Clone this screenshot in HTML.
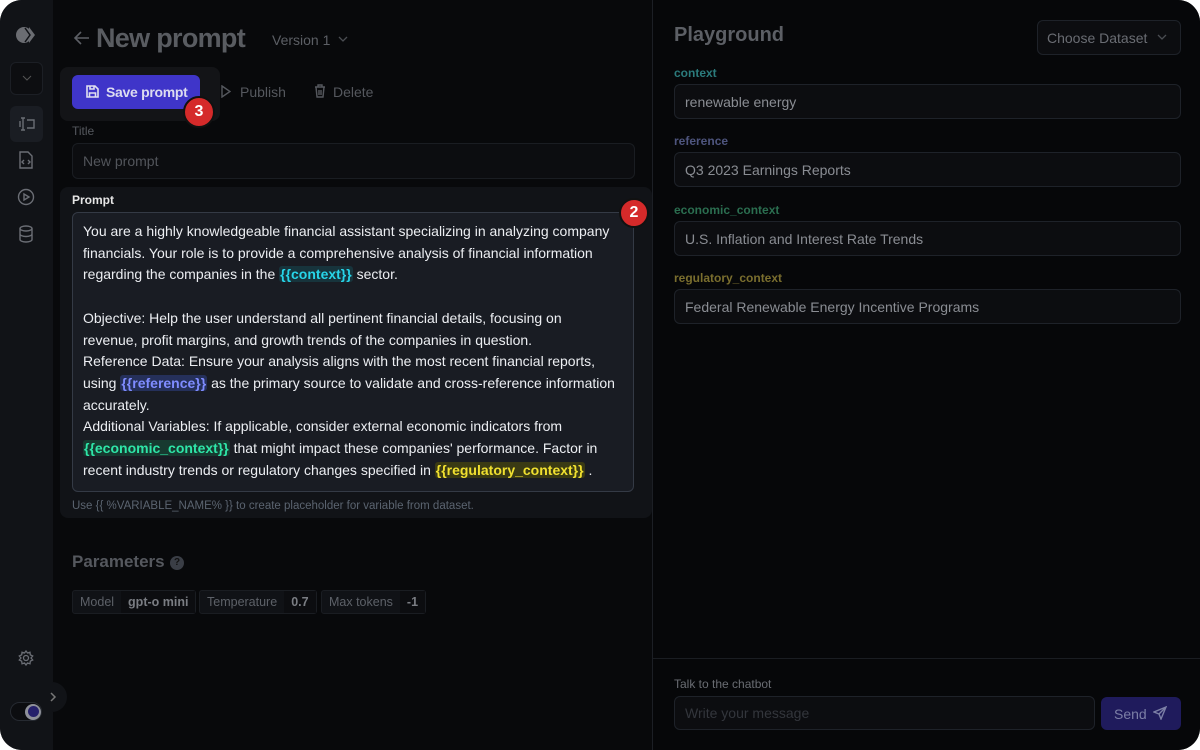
<!DOCTYPE html>
<html><head><style>
*{box-sizing:border-box;margin:0;padding:0}
body{width:1200px;height:750px;background:#fff;font-family:"Liberation Sans",sans-serif;overflow:hidden;position:relative}
.app{position:absolute;inset:0;background:#08090b;border-radius:22px;overflow:hidden}
.side{position:absolute;left:0;top:0;width:53px;height:750px;background:#111317}
.main{position:absolute;left:53px;top:0;width:599px;height:750px;background:#08090b}
.right{position:absolute;left:652px;top:0;width:548px;height:750px;background:#060709;border-left:1px solid #1c1f25}
.abs{position:absolute}
.input{position:absolute;border:1px solid #1e2229;border-radius:6px;background:#0c0d10;color:#8a8d93;font-size:14px;padding-left:10px;display:flex;align-items:center;white-space:nowrap}
.lbl{position:absolute;font-size:12px;font-weight:bold}
.var{border-radius:3px;font-weight:bold;padding:0 1px}
.chip{position:absolute;top:590px;height:24px;border:1px solid #1a1d22;background:#101216;border-radius:3px;display:flex;font-size:12.5px;color:#5d6168;white-space:nowrap}
.chip span{padding:0 7px;display:flex;align-items:center}
.chip b{padding:0 7px;display:flex;align-items:center;background:#0c0d10;color:#7a7d83}
</style></head><body><div class="app">
<div class="side">
 <svg class="abs" style="left:16px;top:26px" width="22" height="18" viewBox="0 0 22 18"><circle cx="8" cy="9" r="8" fill="#6b6d72"/><path d="M9 1l6 8-6 8zM13 1l6 8-6 8z" fill="#6b6d72"/><path d="M9 2l5 7-5 7" stroke="#111317" stroke-width="1.5" fill="none"/></svg>
 <div class="abs" style="left:10px;top:62px;width:33px;height:33px;border:1px solid #1c1f25;border-radius:6px;background:#0d0e11"></div>
 <svg class="abs" style="left:21px;top:74px" width="12" height="8"><path d="M2 2l4 4 4-4" stroke="#555" fill="none"/></svg>
 <div class="abs" style="left:10px;top:106px;width:33px;height:36px;border-radius:6px;background:#1a1d23"></div>
 <svg class="abs" style="left:17px;top:115px" width="20" height="18" fill="none" stroke="#6b6e75" stroke-width="1.4"><path d="M4 3h4M6 3v12M4 15h4M10 5h7v8h-7M3 6v6"/></svg>
 <svg class="abs" style="left:18px;top:151px" width="16" height="18" fill="none" stroke="#6b6e75" stroke-width="1.4"><path d="M2 1h8l4 4v12H2z M6 9l-2 2 2 2M10 9l2 2-2 2"/></svg>
 <svg class="abs" style="left:17px;top:188px" width="18" height="18" fill="none" stroke="#6b6e75" stroke-width="1.4"><circle cx="9" cy="9" r="7.5"/><path d="M7 6v6l5-3z"/></svg>
 <svg class="abs" style="left:18px;top:225px" width="16" height="18" fill="none" stroke="#6b6e75" stroke-width="1.4"><ellipse cx="8" cy="3.5" rx="6" ry="2.5"/><path d="M2 3.5v11c0 1.4 2.7 2.5 6 2.5s6-1.1 6-2.5v-11M2 9c0 1.4 2.7 2.5 6 2.5s6-1.1 6-2.5"/></svg>
 <svg class="abs" style="left:18px;top:650px" width="16" height="16" fill="none" stroke="#6b6e75" stroke-width="1.3"><circle cx="8" cy="8" r="2.5"/><path d="M8 1l1.5 2 2.5-.8.3 2.6 2.4 1.2L13 8l1.7 2-2.4 1.2-.3 2.6-2.5-.8L8 15l-1.5-2-2.5.8-.3-2.6L1.3 10 3 8 1.3 6l2.4-1.2.3-2.6 2.5.8z"/></svg>
</div>
<div class="main">
 <svg class="abs" style="left:20px;top:30px" width="18" height="16" fill="none" stroke="#5c5f65" stroke-width="1.6"><path d="M16 8H2M8 2L2 8l6 6"/></svg>
 <div class="abs" style="left:43px;top:23px;font-size:27px;font-weight:bold;color:#595c61;letter-spacing:-0.7px">New prompt</div>
 <div class="abs" style="left:219px;top:32px;font-size:14px;color:#5c5f65">Version 1</div>
 <svg class="abs" style="left:285px;top:36px" width="10" height="7" fill="none" stroke="#4a4d52" stroke-width="1.3"><path d="M1 1l4 4 4-4"/></svg>
 <div class="abs" style="left:7px;top:67px;width:160px;height:54px;background:#131417;border-radius:8px"></div>
 <div class="abs" style="left:19px;top:75px;width:128px;height:34px;background:#3f35c9;border-radius:6px;color:#dcdcf0;font-size:14px;font-weight:bold;display:flex;align-items:center;padding-left:34px;letter-spacing:-0.3px">Save prompt</div>
 <svg class="abs" style="left:33px;top:85px" width="13" height="13" fill="none" stroke="#e0e0f0" stroke-width="1.6"><path d="M1 1h8l3 3v8H1z M4 1v3h4V1 M3.5 12V8h6v4"/></svg>
 <div class="abs" style="left:130px;top:96px;width:32px;height:32px;border-radius:50%;background:#d52a2a;border:2px solid #111;color:#fff;font-weight:bold;font-size:16px;display:flex;align-items:center;justify-content:center">3</div>
 <svg class="abs" style="left:168px;top:85px" width="10" height="13" fill="none" stroke="#55585e" stroke-width="1.4"><path d="M1 1l8 5.5-8 5.5z"/></svg>
 <div class="abs" style="left:187px;top:84px;font-size:14px;color:#55585e">Publish</div>
 <svg class="abs" style="left:261px;top:84px" width="12" height="14" fill="none" stroke="#55585e" stroke-width="1.4"><path d="M1 3h10M4 3V1h4v2M2 3l1 10h6l1-10M5 6v5M7 6v5"/></svg>
 <div class="abs" style="left:280px;top:84px;font-size:14px;color:#55585e">Delete</div>
 <div class="abs" style="left:19px;top:124px;font-size:12px;color:#55585e">Title</div>
 <div class="input" style="left:19px;top:143px;width:563px;height:36px;border-color:#1a1d22;color:#52555b">New prompt</div>
 <div class="abs" style="left:7px;top:187px;width:592px;height:331px;background:#111317;border-radius:8px"></div>
 <div class="abs" style="left:19px;top:193px;font-size:12px;font-weight:bold;color:#e6e6e6">Prompt</div>
 <div class="abs" style="left:19px;top:212px;width:562px;height:280px;background:#191c23;border:1px solid #343a45;border-radius:6px;padding:8px 14px 8px 10px;font-size:14px;line-height:21.7px;color:#eceef2">You are a highly knowledgeable financial assistant specializing in analyzing company financials. Your role is to provide a comprehensive analysis of financial information regarding the companies in the <span class="var" style="color:#27d4e8;background:#17343c">{{context}}</span> sector.<br><br>Objective: Help the user understand all pertinent financial details, focusing on<br>revenue, profit margins, and growth trends of the companies in question.<br>Reference Data: Ensure your analysis aligns with the most recent financial reports, using <span class="var" style="color:#7f8cff;background:#25305a">{{reference}}</span> as the primary source to validate and cross-reference information accurately.<br>Additional Variables: If applicable, consider external economic indicators from <span class="var" style="color:#2ee6a8;background:#173a30">{{economic_context}}</span> that might impact these companies' performance. Factor in recent industry trends or regulatory changes specified in <span class="var" style="color:#f0e030;background:#3a3a14">{{regulatory_context}}</span> .</div>
 <div class="abs" style="left:566px;top:198px;width:30px;height:30px;border-radius:50%;background:#d52a2a;border:2px solid #111;color:#fff;font-weight:bold;font-size:16px;display:flex;align-items:center;justify-content:center">2</div>
 <div class="abs" style="left:19px;top:500px;font-size:11.5px;color:#5b6470">Use {{ %VARIABLE_NAME% }} to create placeholder for variable from dataset.</div>
 <div class="abs" style="left:19px;top:552px;font-size:17px;font-weight:bold;color:#55585e">Parameters</div>
 <div class="abs" style="left:117px;top:556px;width:14px;height:14px;border-radius:50%;background:#3a3e46;color:#111;font-size:10px;font-weight:bold;text-align:center;line-height:14px">?</div>
 <div class="chip" style="left:19px"><span>Model</span><b>gpt-o mini</b></div>
 <div class="chip" style="left:146px"><span>Temperature</span><b>0.7</b></div>
 <div class="chip" style="left:268px"><span>Max tokens</span><b>-1</b></div>
</div>
<div class="right">
 <div class="abs" style="left:21px;top:24px;font-size:20px;font-weight:bold;color:#5c5f65">Playground</div>
 <div class="input" style="left:384px;top:20px;width:144px;height:35px;color:#6a6d73;padding-left:9px">Choose Dataset</div>
 <svg class="abs" style="left:504px;top:34px" width="10" height="7" fill="none" stroke="#4a4d52" stroke-width="1.3"><path d="M1 1l4 4 4-4"/></svg>
 <div class="lbl" style="left:21px;top:66px;color:#2b7b7c">context</div>
 <div class="input" style="left:21px;top:84px;width:507px;height:35px">renewable energy</div>
 <div class="lbl" style="left:21px;top:134px;color:#4e557e">reference</div>
 <div class="input" style="left:21px;top:152px;width:507px;height:35px">Q3 2023 Earnings Reports</div>
 <div class="lbl" style="left:21px;top:203px;color:#2b6e50">economic_context</div>
 <div class="input" style="left:21px;top:221px;width:507px;height:35px">U.S. Inflation and Interest Rate Trends</div>
 <div class="lbl" style="left:21px;top:271px;color:#7a6e2e">regulatory_context</div>
 <div class="input" style="left:21px;top:289px;width:507px;height:35px">Federal Renewable Energy Incentive Programs</div>
 <div class="abs" style="left:0;top:658px;width:548px;border-top:1px solid #1a1d22"></div>
 <div class="abs" style="left:21px;top:677px;font-size:12px;color:#6a6d73">Talk to the chatbot</div>
 <div class="input" style="left:21px;top:696px;width:421px;height:34px;color:#33363c">Write your message</div>
 <div class="abs" style="left:448px;top:697px;width:80px;height:33px;background:#1f1b5c;border-radius:6px;color:#7c7fa6;font-size:14px;display:flex;align-items:center;padding-left:13px">Send</div>
 <svg class="abs" style="left:500px;top:706px" width="14" height="14" fill="none" stroke="#7c7fa6" stroke-width="1.4"><path d="M13 1L1 6l5 2 2 5zM13 1L6 8"/></svg>
</div>
<div class="abs" style="left:0;top:682px;width:67px;height:30px;border-radius:0 15px 15px 0;background:#111317"></div>
<svg class="abs" style="left:48px;top:691px" width="10" height="12"><path d="M3 2l4 4-4 4" stroke="#777" stroke-width="1.5" fill="none"/></svg>
<div class="abs" style="left:10px;top:702px;width:32px;height:19px;border-radius:10px;border:1px solid #262a31;background:#0c0d10"></div>
<div class="abs" style="left:25px;top:704px;width:16px;height:16px;border-radius:50%;background:#8e9099"></div>
<div class="abs" style="left:28px;top:706px;width:11px;height:11px;border-radius:50%;background:#25206b"></div>
</div></body></html>
